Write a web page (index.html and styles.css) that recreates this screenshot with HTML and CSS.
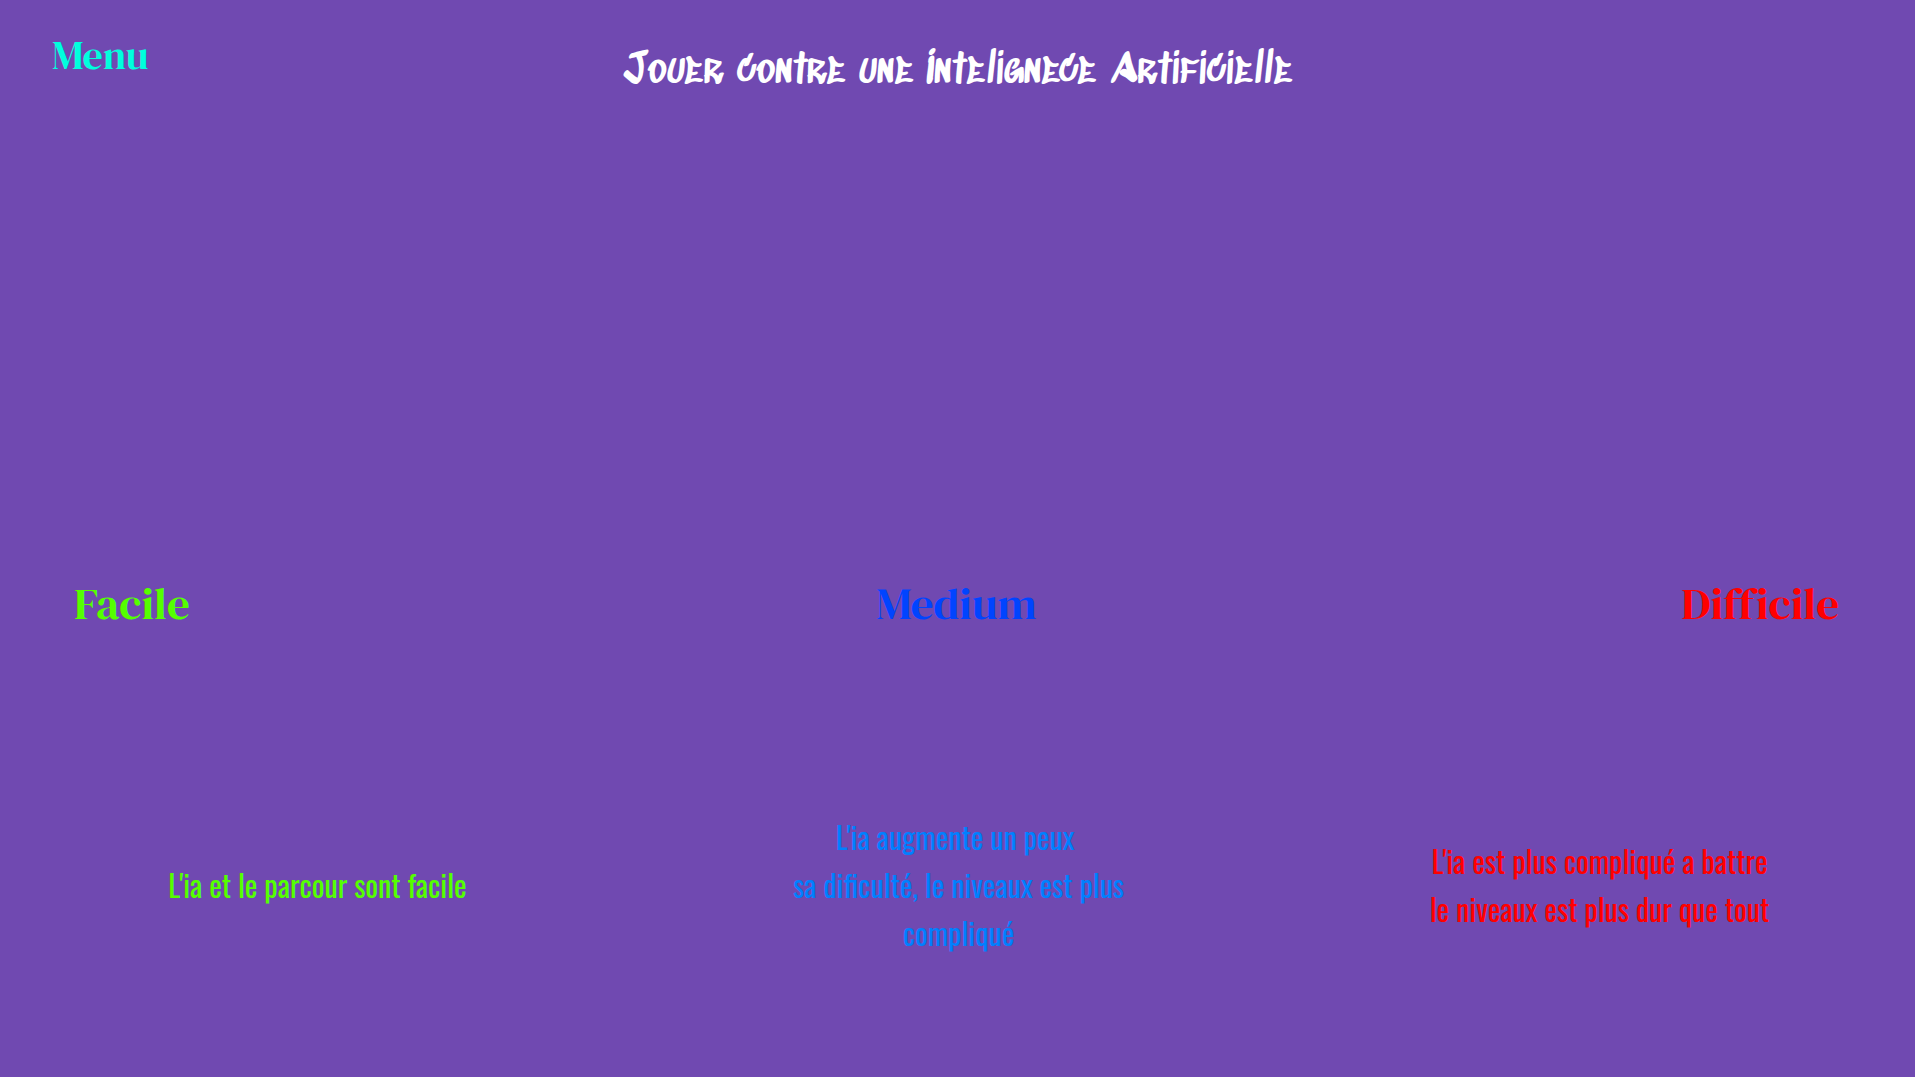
FILE: index.html
```html
<!DOCTYPE html>
<html lang="fr">
<head>
  <meta charset="UTF-8">
  <meta name="viewport" content="width=device-width, initial-scale=1.0">
  <title>Jouer contre une IA</title>
  <link rel="stylesheet" href="styles.css">
</head>
<body>

  <header>
    <a class="menu" href="#">Menu</a>
    <h1>Jouer contre une Intelignece Artificielle</h1>
  </header>

  <main>
    <nav class="niveaux">
      <a class="facile" href="#">Facile</a>
      <a class="medium" href="#">Medium</a>
      <a class="difficile" href="#">Difficile</a>
    </nav>

    <div class="descriptions">
      <p class="texte-facile">L'ia et le parcour sont facile</p>
      <p class="texte-medium">L'ia augmente un peux&nbsp;<br>sa dificulté, le niveaux est plus<br>compliqué</p>
      <p class="texte-difficile">L'ia est plus compliqué a battre<br>le niveaux est plus dur que tout</p>
    </div>
  </main>

</body>
</html>
```

FILE: styles.css
```css
* {
  margin: 0;
  padding: 0;
  box-sizing: border-box;
}

body {
  background-color: #7049b1;
}

a {
  text-decoration: none;
}

header {
  display: grid;
  grid-template-columns: 1fr auto 1fr;
  padding: 31px 52px 0;
}

.menu {
  color: #00ffdd;
  font-family: "DM Serif Display", "Liberation Serif", serif;
  font-size: 40px;
  line-height: 48px;
}

h1 {
  color: white;
  font-family: "Sedgwick Ave Display", "Open Sans", sans-serif;
  font-size: 41px;
  font-weight: normal;
  font-variant-ligatures: none;
  line-height: 82px;
}

.niveaux {
  display: grid;
  grid-template-columns: 1fr auto 1fr;
  margin-top: 460px;
  padding: 0 76px 0 74px;
  font-family: "DM Serif Display", "Liberation Serif", serif;
  font-size: 45px;
  line-height: 60px;
}

.facile {
  color: #55ff00;
}

.medium {
  color: #0044ff;
}

.difficile {
  color: #ff0000;
  text-align: right;
}

.descriptions {
  display: grid;
  grid-template-columns: repeat(3, 1fr);
  gap: 10px;
  align-items: center;
  margin-top: 180px;
  padding-left: 2px;
  text-align: center;
  font-family: "Oswald", "Open Sans", sans-serif;
  font-size: 30px;
  line-height: 48px;
}

.texte-facile {
  color: #55ff00;
}

.texte-medium {
  color: #0080ff;
}

.texte-difficile {
  color: #ff0000;
}
```
